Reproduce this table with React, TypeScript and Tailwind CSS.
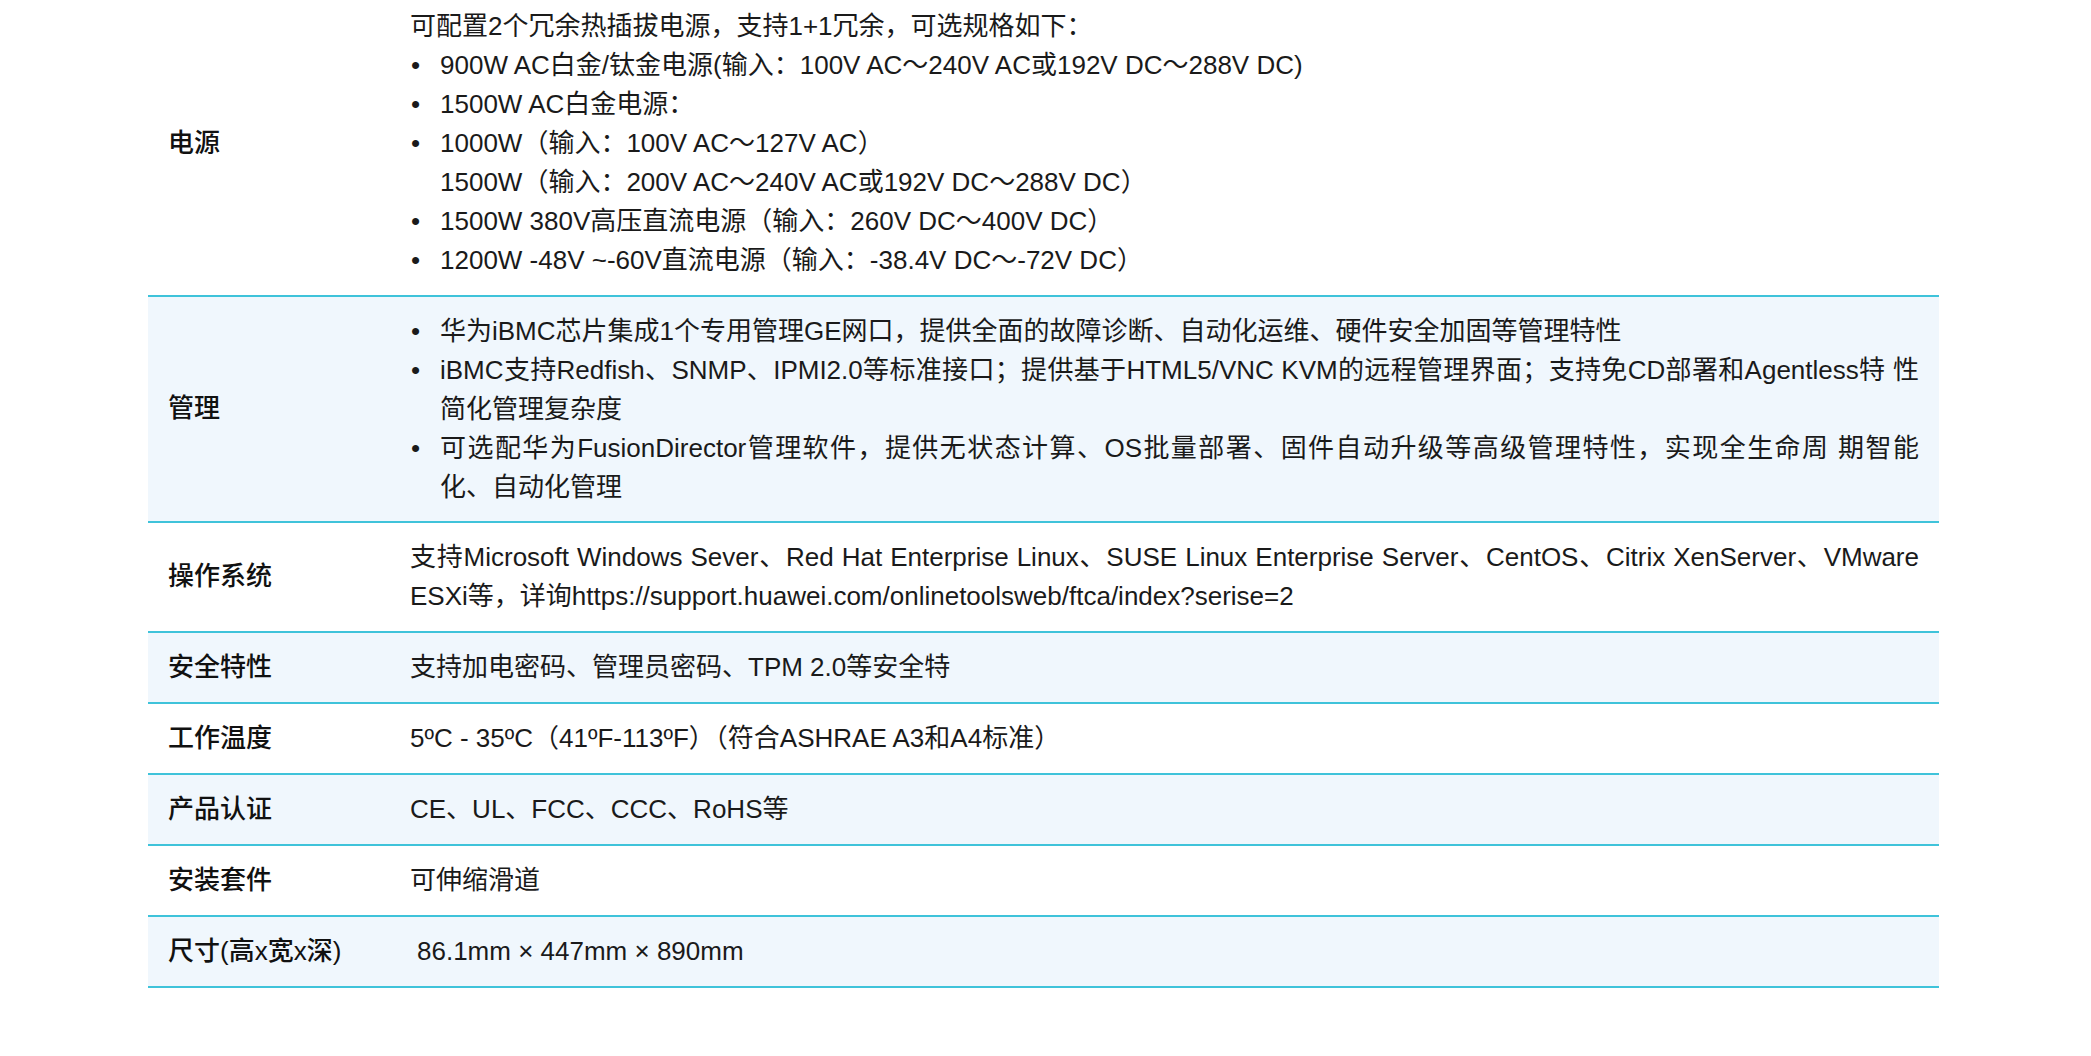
import React from "react";

type Row = {
  label: string;
  content: React.ReactNode;
};

const Bullet = ({ children }: { children: React.ReactNode }) => (
  <div className="flex">
    <span className="w-[30px] shrink-0 pl-[1px]">•</span>
    <div className="flex-1">{children}</div>
  </div>
);

// lines that run to the right edge in the original are justified on their own
const Full = ({ children }: { children: React.ReactNode }) => (
  <div className="text-justify [text-align-last:justify]">{children}</div>
);

const rows: Row[] = [
  {
    label: "电源",
    content: (
      <>
        <div>可配置2个冗余热插拔电源，支持1+1冗余，可选规格如下：</div>
        <Bullet>900W AC白金/钛金电源(输入：100V AC～240V AC或192V DC～288V DC)</Bullet>
        <Bullet>1500W AC白金电源：</Bullet>
        <Bullet>
          1000W（输入：100V AC～127V AC）
          <br />
          1500W（输入：200V AC～240V AC或192V DC～288V DC）
        </Bullet>
        <Bullet>1500W 380V高压直流电源（输入：260V DC～400V DC）</Bullet>
        <Bullet>1200W -48V ~-60V直流电源（输入：-38.4V DC～-72V DC）</Bullet>
      </>
    ),
  },
  {
    label: "管理",
    content: (
      <>
        <Bullet>华为iBMC芯片集成1个专用管理GE网口，提供全面的故障诊断、自动化运维、硬件安全加固等管理特性</Bullet>
        <Bullet>
          <Full>iBMC支持Redfish、SNMP、IPMI2.0等标准接口；提供基于HTML5/VNC KVM的远程管理界面；支持免CD部署和Agentless特 性</Full>
          <div>简化管理复杂度</div>
        </Bullet>
        <Bullet>
          <Full>可选配华为FusionDirector管理软件，提供无状态计算、OS批量部署、固件自动升级等高级管理特性，实现全生命周 期智能</Full>
          <div>化、自动化管理</div>
        </Bullet>
      </>
    ),
  },
  {
    label: "操作系统",
    content: (
      <>
        <Full>支持Microsoft Windows Sever、Red Hat Enterprise Linux、SUSE Linux Enterprise Server、CentOS、Citrix XenServer、VMware</Full>
        <div>ESXi等，详询https://support.huawei.com/onlinetoolsweb/ftca/index?serise=2</div>
      </>
    ),
  },
  { label: "安全特性", content: "支持加电密码、管理员密码、TPM 2.0等安全特" },
  { label: "工作温度", content: "5ºC - 35ºC（41ºF-113ºF）（符合ASHRAE A3和A4标准）" },
  { label: "产品认证", content: "CE、UL、FCC、CCC、RoHS等" },
  { label: "安装套件", content: "可伸缩滑道" },
  { label: "尺寸(高x宽x深)", content: <span className="pl-[7px]">86.1mm × 447mm × 890mm</span> },
];

export default function App() {
  return (
    <div
      className="min-h-screen w-full bg-white text-[#1a1a1a] overflow-hidden"
      style={{ fontFamily: '"Liberation Sans", "Noto Sans CJK SC", sans-serif' }}
    >
      <div className="ml-[148px] -mt-[8px] w-[1791px] text-[26px] leading-[39px]">
        {rows.map((row, i) => (
          <div
            key={row.label}
            className={`grid grid-cols-[262px_1fr] border-b-2 border-[#3fc3da] ${
              i % 2 === 1 ? "bg-[#f0f7fd]" : "bg-white"
            }`}
          >
            <div className="flex items-center pl-5 py-[15px] font-medium text-[#111]">{row.label}</div>
            <div className="py-[15px] pb-[14.5px] pr-5">{row.content}</div>
          </div>
        ))}
      </div>
    </div>
  );
}
